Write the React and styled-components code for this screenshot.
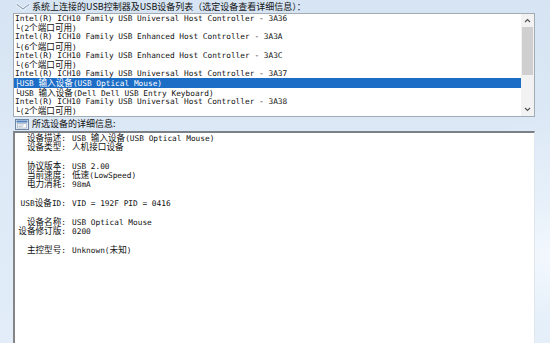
import React from "react";
import styled, { createGlobalStyle } from "styled-components";

const GlobalStyle = createGlobalStyle`
  html, body {
    margin: 0;
    padding: 0;
  }
  body {
    font-family: "Noto Sans CJK SC", "Noto Sans", sans-serif;
  }
`;

const HAN = /([\u2e80-\u9fff\u3000-\u303f\uff00-\uffef]+)/;

const withHan = (text) =>
  text.split(HAN).map((part, index) =>
    HAN.test(part) ? <Han key={index}>{part}</Han> : part
  );

const devices = [
  { text: "Intel(R) ICH10 Family USB Universal Host Controller - 3A36" },
  { text: "└(2个端口可用)" },
  { text: "Intel(R) ICH10 Family USB Enhanced Host Controller - 3A3A" },
  { text: "└(6个端口可用)" },
  { text: "Intel(R) ICH10 Family USB Enhanced Host Controller - 3A3C" },
  { text: "└(6个端口可用)" },
  { text: "Intel(R) ICH10 Family USB Universal Host Controller - 3A37" },
  { text: "├USB 输入设备(USB Optical Mouse)", selected: true },
  { text: "└USB 输入设备(Dell Dell USB Entry Keyboard)" },
  { text: "Intel(R) ICH10 Family USB Universal Host Controller - 3A38" },
  { text: "└(2个端口可用)" },
];

const details = [
  { label: "设备描述:", value: "USB 输入设备(USB Optical Mouse)" },
  { label: "设备类型:", value: "人机接口设备" },
  null,
  { label: "协议版本:", value: "USB 2.00" },
  { label: "当前速度:", value: "低速(LowSpeed)" },
  { label: "电力消耗:", value: "98mA" },
  null,
  { label: "USB设备ID:", value: "VID = 192F PID = 0416" },
  null,
  { label: "设备名称:", value: "USB Optical Mouse" },
  { label: "设备修订版:", value: "0200" },
  null,
  { label: "主控型号:", value: "Unknown(未知)" },
];

const App = () => {
  return (
    <>
      <GlobalStyle />
      <Page>
        <SectionTitle>
          <svg width="14" height="8" viewBox="0 0 14 8">
            <polyline
              points="1,1.5 7,6 13,1.5"
              fill="none"
              stroke="#ffffff"
              strokeWidth="2.6"
              strokeLinecap="round"
            />
            <polyline
              points="1,1.5 7,6 13,1.5"
              fill="none"
              stroke="#8fa6bf"
              strokeWidth="1.2"
              strokeLinecap="round"
            />
          </svg>
          <TitleText>
            系统上连接的USB控制器及USB设备列表（选定设备查看详细信息）：
          </TitleText>
        </SectionTitle>

        <ListBox>
          <Rows>
            {devices.map((row, index) => (
              <Row key={index} $selected={row.selected}>
                {withHan(row.text)}
              </Row>
            ))}
          </Rows>
          <ScrollBar>
            <ScrollArrow>
              <svg width="7" height="5" viewBox="0 0 7 5">
                <polyline points="1,4 3.5,1.5 6,4" fill="none" stroke="#555" strokeWidth="1.2" />
              </svg>
            </ScrollArrow>
            <Track>
              <Thumb />
            </Track>
            <ScrollArrow>
              <svg width="7" height="5" viewBox="0 0 7 5">
                <polyline points="1,1 3.5,3.5 6,1" fill="none" stroke="#555" strokeWidth="1.2" />
              </svg>
            </ScrollArrow>
          </ScrollBar>
        </ListBox>

        <SubTitle>
          <svg width="14" height="11" viewBox="0 0 14 11">
            <rect x="0.5" y="0.5" width="13" height="10" fill="#e8eef5" stroke="#6f87a3" />
            <rect x="1.5" y="1.5" width="11" height="2" fill="#4f80bf" />
            <rect x="2.5" y="4.5" width="9" height="4.5" fill="#ffffff" stroke="#a9b6c4" strokeWidth="0.8" />
            <line x1="3.5" y1="6" x2="9" y2="6" stroke="#9aa9b9" strokeWidth="0.7" />
            <line x1="3.5" y1="7.6" x2="7.5" y2="7.6" stroke="#9aa9b9" strokeWidth="0.7" />
          </svg>
          <TitleText>所选设备的详细信息:</TitleText>
        </SubTitle>

        <DetailBox>
          {details.map((item, index) =>
            item ? (
              <DetailRow key={index}>
                <Label>{withHan(item.label)}</Label>
                <Value>{withHan(item.value)}</Value>
              </DetailRow>
            ) : (
              <Blank key={index} />
            )
          )}
        </DetailBox>
      </Page>
    </>
  );
};

export default App;

const Page = styled.div`
  width: 550px;
  height: 343px;
  overflow: hidden;
  display: flex;
  flex-direction: column;
  background:
    radial-gradient(circle at 100% 75%, #f3f8fd 0, #e6f0fa 60px, rgba(230, 240, 250, 0) 140px),
    linear-gradient(180deg, #d6e4f3 0%, #dde9f6 45%, #e2edf9 100%);
`;

const SectionTitle = styled.div`
  height: 13px;
  display: flex;
  align-items: center;
  gap: 2px;
  padding-left: 16px;
`;

const TitleText = styled.span`
  font-family: "Noto Sans CJK SC", "Noto Sans", sans-serif;
  font-size: 9px;
  line-height: 12px;
  color: #111111;
  white-space: nowrap;
`;

const ListBox = styled.div`
  margin: 0 15px 0 13px;
  height: 104px;
  box-sizing: border-box;
  border: 1px solid #a3abb5;
  background: #ffffff;
  display: flex;
`;

const Rows = styled.div`
  flex: 1;
  overflow: hidden;
  font-family: "DejaVu Sans Mono", "Liberation Mono", "Noto Sans CJK SC", monospace;
  font-size: 7.8px;
  line-height: 9.2px;
`;

const Row = styled.div`
  height: 9.2px;
  padding-left: 1px;
  white-space: nowrap;
  color: ${(p) => (p.$selected ? "#ffffff" : "#111111")};
  background: ${(p) => (p.$selected ? "#1c6dc6" : "transparent")};
`;

const Han = styled.span`
  font-family: "Noto Sans CJK SC", sans-serif;
  font-size: 8.6px;
  line-height: 9.2px;
`;

const ScrollBar = styled.div`
  width: 13px;
  display: flex;
  flex-direction: column;
  background: #f2f2f2;
`;

const ScrollArrow = styled.div`
  height: 13px;
  display: flex;
  align-items: center;
  justify-content: center;
`;

const Track = styled.div`
  flex: 1;
  padding: 0 1px;
`;

const Thumb = styled.div`
  height: 48px;
  background: #cfcfcf;
`;

const SubTitle = styled.div`
  height: 14px;
  display: flex;
  align-items: center;
  gap: 3px;
  padding-left: 15px;
`;

const DetailBox = styled.div`
  flex: 1;
  margin: 0 15px 0 13px;
  padding-top: 0;
  background: #ffffff;
  border-top: 2px solid #7b8087;
  border-left: 2px solid #858585;
  border-right: 1px solid #e1e6ec;
  font-family: "DejaVu Sans Mono", "Liberation Mono", "Noto Sans CJK SC", monospace;
  font-size: 7.8px;
  line-height: 9.3px;
  color: #111111;
`;

const DetailRow = styled.div`
  height: 9.3px;
  display: grid;
  grid-template-columns: 51px 1fr;
  align-items: baseline;
  column-gap: 6px;
  white-space: nowrap;
`;

const Label = styled.span`
  text-align: right;
`;

const Value = styled.span``;

const Blank = styled.div`
  height: 9.3px;
`;
